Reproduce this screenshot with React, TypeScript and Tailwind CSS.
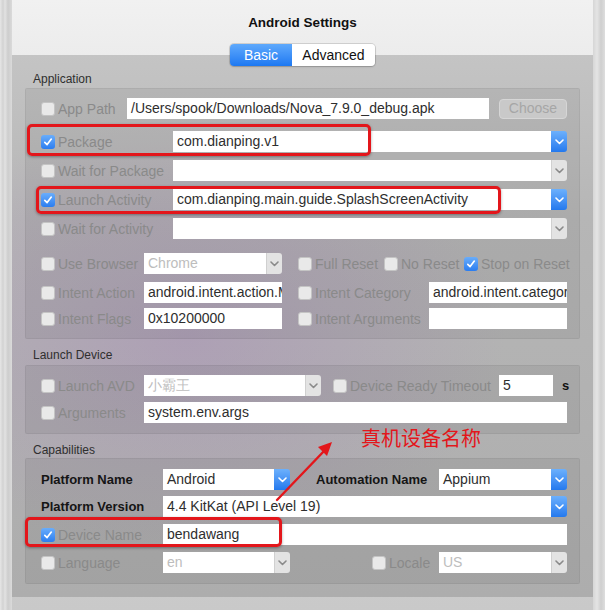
import React from "react";

const FONT = { fontFamily: '"Liberation Sans", Arial, sans-serif' };

function Check({ checked }: { checked?: boolean }) {
  if (checked) {
    return (
      <span className="w-[14px] h-[14px] rounded-[3px] bg-gradient-to-b from-[#69adfb] to-[#2a7df0] flex items-center justify-center shrink-0">
        <svg width="10" height="10" viewBox="0 0 10 10">
          <path d="M1.8 5.3 L4.1 7.6 L8.3 2.1" stroke="white" strokeWidth="1.7" fill="none" strokeLinecap="round" strokeLinejoin="round" />
        </svg>
      </span>
    );
  }
  return <span className="w-[14px] h-[14px] rounded-[3px] bg-[#e9e9e9] border border-[#c4c4c4] shrink-0" />;
}

function Label({ children }: { children: React.ReactNode }) {
  return <span className="text-[14px] text-[#8a8a8a] whitespace-nowrap leading-none">{children}</span>;
}

function Opt({ label, checked, className }: { label: string; checked?: boolean; className?: string }) {
  return (
    <div className={`flex items-center gap-[3px] shrink-0 ${className ?? ""}`}>
      <Check checked={checked} />
      <Label>{label}</Label>
    </div>
  );
}

function Field({ value, className, dim }: { value?: string; className?: string; dim?: boolean }) {
  return (
    <div
      className={`h-[21px] bg-white flex items-center pl-[4px] text-[14px] whitespace-nowrap overflow-hidden ${
        dim ? "text-[#bdbdbd]" : "text-[#2e2e2e]"
      } ${className ?? ""}`}
    >
      {value}
    </div>
  );
}

function Chevron({ color }: { color: string }) {
  return (
    <svg width="9" height="6" viewBox="0 0 9 6">
      <path d="M1 1 L4.5 4.5 L8 1" stroke={color} strokeWidth="1.6" fill="none" strokeLinecap="round" strokeLinejoin="round" />
    </svg>
  );
}

function Select({ value, className, blue, dim }: { value?: string; className?: string; blue?: boolean; dim?: boolean }) {
  return (
    <div className={`flex h-[21px] ${className ?? ""}`}>
      <Field value={value} dim={dim} className="flex-1 min-w-0" />
      {blue ? (
        <div className="w-[16px] h-full rounded-r-[3px] bg-gradient-to-b from-[#6cb0fc] to-[#2379ee] flex items-center justify-center">
          <Chevron color="#ffffff" />
        </div>
      ) : (
        <div className="w-[16px] h-full rounded-r-[3px] bg-[#e3e3e3] border-l border-[#d0d0d0] flex items-center justify-center">
          <Chevron color="#8a8a8a" />
        </div>
      )}
    </div>
  );
}

function Row({ children, className }: { children: React.ReactNode; className?: string }) {
  return <div className={`flex items-center h-[21px] ${className ?? ""}`}>{children}</div>;
}

function SectionTitle({ children, className }: { children: React.ReactNode; className?: string }) {
  return <div className={`ml-[8px] h-[14px] text-[12px] leading-[14px] text-[#2f2f2f] ${className ?? ""}`}>{children}</div>;
}

function Box({ children, className }: { children: React.ReactNode; className?: string }) {
  return (
    <div className={`bg-black/[0.06] border border-black/[0.05] rounded-[2px] pl-[15px] pr-[12px] ${className ?? ""}`}>
      {children}
    </div>
  );
}

export default function App() {
  return (
    <div
      className="relative w-[605px] h-[610px] overflow-hidden bg-gradient-to-b from-[#f1f1f1] via-[#d6d6d6] to-[#c9c9c9]"
      style={FONT}
    >
      {/* window edges */}
      <div className="absolute left-0 top-0 bottom-0 w-[12px] bg-[linear-gradient(90deg,#e6e6e6_0,#d2d2d2_3px,#e2e2e2_5px,#cdcdcd_8px,#dadada_12px)]" />
      <div className="absolute right-0 top-0 bottom-0 w-[12px] bg-[linear-gradient(90deg,#d6d6d6_0,#e4e4e4_4px,#cfcfcf_8px,#dedede_12px)]" />

      {/* header */}
      <div className="relative flex flex-col items-center pt-[16px]">
        <div className="h-[14px] leading-[14px] text-[13.5px] font-bold text-[#111]">Android Settings</div>
        <div className="relative z-10 mt-[14px] flex h-[22px] text-[14px] rounded-[4px] shadow-[0_0_0_1px_rgba(0,0,0,0.12),0_1px_2px_rgba(0,0,0,0.15)]">
          <div className="w-[62px] flex items-center justify-center rounded-l-[4px] bg-gradient-to-b from-[#5ea9fc] to-[#1c78f2] text-white">
            Basic
          </div>
          <div className="w-[83px] flex items-center justify-center rounded-r-[4px] bg-white text-[#111]">
            Advanced
          </div>
        </div>
      </div>

      {/* tab panel */}
      <div className="relative mt-[-11px] ml-[12px] w-[581px] h-[542px] px-[13px] pt-[17px] bg-[linear-gradient(180deg,#c4c4c4_0%,#b6b6b6_30%,#adadad_100%)]">
        <div className="absolute inset-0 bg-[radial-gradient(ellipse_55%_40%_at_30%_52%,rgba(160,115,185,0.3),rgba(160,115,185,0)_100%)]" />
        <div className="relative">
          <SectionTitle className="mb-[2px]">Application</SectionTitle>
          <Box className="pt-[9px] pb-[9px]">
            <Row>
              <Opt label="App Path" className="w-[86px]" />
              <Field value="/Users/spook/Downloads/Nova_7.9.0_debug.apk" className="w-[362px] shrink-0" />
              <div className="ml-[10px] w-[68px] h-[20px] rounded-[4px] bg-[#c9c9c9] border border-[#d6d6d6] flex items-center justify-center text-[14px] text-[#a6a6a6]">
                Choose
              </div>
            </Row>
            <Row className="mt-[12px]">
              <Opt label="Package" checked className="w-[132px]" />
              <Select value="com.dianping.v1" blue className="flex-1" />
            </Row>
            <Row className="mt-[8px]">
              <Opt label="Wait for Package" className="w-[132px]" />
              <Select className="flex-1" />
            </Row>
            <Row className="mt-[8px]">
              <Opt label="Launch Activity" checked className="w-[132px]" />
              <Select value="com.dianping.main.guide.SplashScreenActivity" blue className="flex-1" />
            </Row>
            <Row className="mt-[8px]">
              <Opt label="Wait for Activity" className="w-[132px]" />
              <Select className="flex-1" />
            </Row>
            <Row className="mt-[14px]">
              <Opt label="Use Browser" className="w-[103px]" />
              <Select value="Chrome" dim className="w-[138px] shrink-0" />
              <Opt label="Full Reset" className="ml-[16px] w-[86px]" />
              <Opt label="No Reset" className="w-[80px]" />
              <Opt label="Stop on Reset" checked className="w-[90px]" />
            </Row>
            <Row className="mt-[8px]">
              <Opt label="Intent Action" className="w-[103px]" />
              <Field value="android.intent.action.MAIN" className="w-[138px] shrink-0" />
              <Opt label="Intent Category" className="ml-[16px] w-[131px]" />
              <Field value="android.intent.category.LAUNCHER" className="flex-1" />
            </Row>
            <Row className="mt-[5px]">
              <Opt label="Intent Flags" className="w-[103px]" />
              <Field value="0x10200000" className="w-[138px] shrink-0" />
              <Opt label="Intent Arguments" className="ml-[16px] w-[131px]" />
              <Field className="flex-1" />
            </Row>
          </Box>

          <SectionTitle className="mt-[9px] mb-[3px]">Launch Device</SectionTitle>
          <Box className="pt-[9px] pb-[10px]">
            <Row>
              <Opt label="Launch AVD" className="w-[103px]" />
              <Select value="小霸王" dim className="w-[177px] shrink-0" />
              <Opt label="Device Ready Timeout" className="ml-[12px] w-[166px]" />
              <Field value="5" className="w-[54px] shrink-0" />
              <span className="ml-[9px] text-[13px] font-bold text-[#111]">s</span>
            </Row>
            <Row className="mt-[6px]">
              <Opt label="Arguments" className="w-[103px]" />
              <Field value="system.env.args" className="flex-1" />
            </Row>
          </Box>

          <SectionTitle className="mt-[9px] mb-[1px]">Capabilities</SectionTitle>
          <Box className="pt-[10px] pb-[10px]">
            <Row>
              <span className="w-[122px] shrink-0 text-[13px] font-bold text-[#151515]">Platform Name</span>
              <Select value="Android" blue className="w-[127px] shrink-0" />
              <span className="ml-[26px] w-[123px] shrink-0 text-[13px] font-bold text-[#151515]">Automation Name</span>
              <Select value="Appium" blue className="flex-1" />
            </Row>
            <Row className="mt-[6px]">
              <span className="w-[122px] shrink-0 text-[13px] font-bold text-[#151515]">Platform Version</span>
              <Select value="4.4 KitKat (API Level 19)" blue className="flex-1" />
            </Row>
            <Row className="mt-[7px]">
              <Opt label="Device Name" checked className="w-[122px]" />
              <Field value="bendawang" className="flex-1" />
            </Row>
            <Row className="mt-[7px]">
              <Opt label="Language" className="w-[122px]" />
              <Select value="en" dim className="w-[127px] shrink-0" />
              <Opt label="Locale" className="ml-[82px] w-[67px]" />
              <Select value="US" dim className="flex-1" />
            </Row>
          </Box>
        </div>
      </div>

      {/* annotations */}
      <div className="absolute left-[27px] top-[124px] w-[344px] h-[32px] rounded-[5px] border-[3px] border-[#e3161b] shadow-[0_1px_3px_rgba(0,0,0,0.35)]" />
      <div className="absolute left-[36px] top-[186px] w-[465px] h-[28px] rounded-[5px] border-[3px] border-[#e3161b] shadow-[0_1px_3px_rgba(0,0,0,0.35)]" />
      <div className="absolute left-[25px] top-[517px] w-[257px] h-[30px] rounded-[5px] border-[3px] border-[#e3161b] shadow-[0_1px_3px_rgba(0,0,0,0.35)]" />
      <svg className="absolute left-[268px] top-[434px]" width="72" height="74" viewBox="0 0 72 74">
        <line x1="9" y1="66" x2="58" y2="15" stroke="#e3161b" strokeWidth="2.4" strokeLinecap="round" />
        <polygon points="64,8 50,13 59,22" fill="#e3161b" />
      </svg>
      <div
        className="absolute left-[361px] top-[426px] text-[20px] leading-[24px] text-[#e3161b]"
        style={{ fontFamily: '"Noto Sans CJK SC", sans-serif' }}
      >
        真机设备名称
      </div>
    </div>
  );
}
